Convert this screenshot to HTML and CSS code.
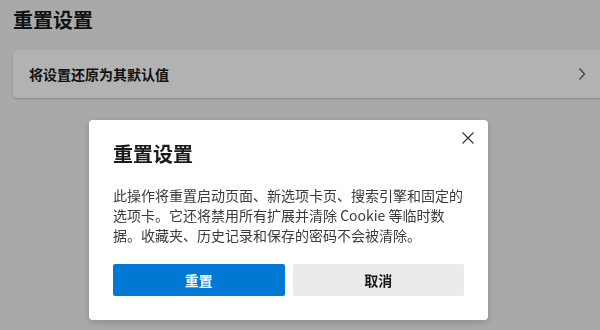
FILE: index.html
```html
<!DOCTYPE html>
<html lang="zh-CN">
<head>
<meta charset="utf-8">
<title>重置设置</title>
<link rel="stylesheet" href="styles.css">
</head>
<body>
<main class="page">
  <h1 class="page-title">重置设置</h1>
  <div class="card">
    <span class="card-label">将设置还原为其默认值</span>
    <svg class="chevron" width="8" height="14" viewBox="0 0 8 14" aria-hidden="true"><path d="M1.5 1.5 L6.5 7 L1.5 12.5" fill="none" stroke="#5c5c5c" stroke-width="1.3"/></svg>
  </div>
</main>
<div class="overlay">
  <div class="dialog" role="dialog">
    <button class="close" aria-label="关闭">
      <svg width="12" height="12" viewBox="0 0 12 12"><path d="M0.5 0.5 L11.5 11.5 M11.5 0.5 L0.5 11.5" stroke="#333" stroke-width="1.1" fill="none"/></svg>
    </button>
    <h2 class="dialog-title">重置设置</h2>
    <p class="dialog-body">此操作将重置启动页面、新选项卡页、搜索引擎和固定的选项卡。它还将禁用所有扩展并清除 Cookie 等临时数据。收藏夹、历史记录和保存的密码不会被清除。</p>
    <div class="actions">
      <button class="btn btn-primary">重置</button>
      <button class="btn btn-secondary">取消</button>
    </div>
  </div>
</div>
</body>
</html>
```
FILE: styles.css
```css
html, body {
  margin: 0;
  padding: 0;
  height: 100%;
  overflow: hidden;
}
body {
  background: #f3f3f3;
  font-family: "Noto Sans CJK SC", "Noto Sans", sans-serif;
  color: #1a1a1a;
}
.page {
  padding: 6px 0 0 13px;
}
.page-title {
  margin: 0;
  font-size: 20px;
  line-height: 28px;
  font-weight: 700;
  color: #1a1a1a;
}
.card {
  margin-top: 16px;
  margin-right: -6px;
  height: 48px;
  box-sizing: border-box;
  background: #ffffff;
  border-radius: 4px;
  box-shadow: 0 0 1px rgba(0,0,0,0.15), 0 1px 2px rgba(0,0,0,0.18);
  display: flex;
  align-items: center;
  justify-content: space-between;
  padding: 0 20px 0 16px;
}
.card-label {
  font-size: 14px;
  font-weight: 600;
  line-height: 20px;
}
.chevron {
  display: block;
}
.overlay {
  position: fixed;
  inset: 0;
  background: rgba(0,0,0,0.3);
  padding: 120px 0 0 89px;
  box-sizing: border-box;
}
.dialog {
  position: relative;
  width: 399px;
  box-sizing: border-box;
  background: #ffffff;
  border-radius: 4px;
  padding: 20px 24px 24px;
  box-shadow: 0 2px 8px rgba(0,0,0,0.2);
}
.close {
  position: absolute;
  top: 12px;
  right: 14px;
  width: 12px;
  height: 12px;
  padding: 0;
  border: 0;
  background: transparent;
  display: flex;
}
.dialog-title {
  margin: 0;
  font-size: 20px;
  line-height: 28px;
  font-weight: 700;
  color: #1a1a1a;
}
.dialog-body {
  margin: 17px 0 0;
  font-size: 14px;
  line-height: 20px;
  color: #3b3b3b;
}
.actions {
  margin-top: 19px;
  display: flex;
  gap: 8px;
}
.btn {
  width: 172px;
  height: 32px;
  border: 0;
  border-radius: 2px;
  font-family: inherit;
  font-size: 14px;
  font-weight: 700;
  cursor: pointer;
}
.btn-primary {
  background: #0078d4;
  color: #ffffff;
}
.btn-secondary {
  background: #ebebeb;
  color: #1a1a1a;
}
```
